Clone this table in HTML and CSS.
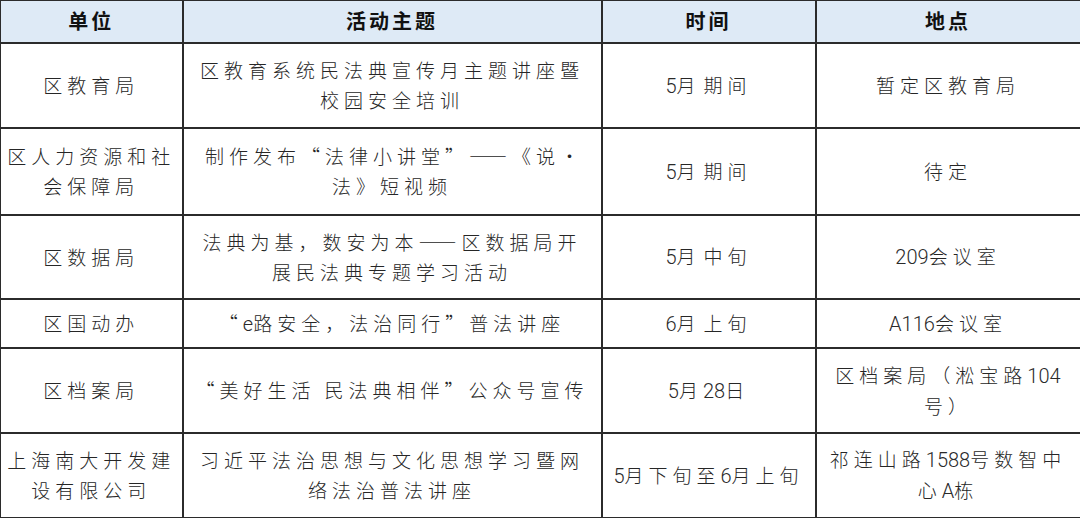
FILE: index.html
```html
<!DOCTYPE html>
<html lang="zh-CN">
<head>
<meta charset="utf-8">
<title>活动安排</title>
<link rel="stylesheet" href="styles.css">
</head>
<body>
<table class="schedule">
  <colgroup>
    <col class="c-unit">
    <col class="c-topic">
    <col class="c-time">
    <col class="c-place">
  </colgroup>
  <thead>
    <tr class="head-row">
      <th>单位</th>
      <th>活动主题</th>
      <th>时间</th>
      <th>地点</th>
    </tr>
  </thead>
  <tbody>
    <tr class="r1">
      <td>区教育局</td>
      <td>区教育系统民法典宣传月主题讲座暨<br>校园安全培训</td>
      <td><span class="num">5</span>月<span class="gap"></span>期间</td>
      <td>暂定区教育局</td>
    </tr>
    <tr class="r2">
      <td>区人力资源和社<br>会保障局</td>
      <td>制作发布“法律小讲堂”<span class="dash">——</span>《说<span class="dot">·</span><br>法》短视频</td>
      <td><span class="num">5</span>月<span class="gap"></span>期间</td>
      <td>待定</td>
    </tr>
    <tr class="r3">
      <td>区数据局</td>
      <td>法典为基，数安为本<span class="dash">——</span>区数据局开<br>展民法典专题学习活动</td>
      <td><span class="num">5</span>月<span class="gap"></span>中旬</td>
      <td><span class="num">209</span>会议室</td>
    </tr>
    <tr class="r4">
      <td>区国动办</td>
      <td>“<span class="num">e</span>路安全，法治同行”普法讲座</td>
      <td><span class="num">6</span>月<span class="gap"></span>上旬</td>
      <td><span class="num">A116</span>会议室</td>
    </tr>
    <tr class="r5">
      <td>区档案局</td>
      <td>“美好生活 民法典相伴”公众号宣传</td>
      <td><span class="num">5</span>月<span class="num">28</span>日</td>
      <td>区档案局（淞宝路<span class="num">104</span><br>号）</td>
    </tr>
    <tr class="r6">
      <td>上海南大开发建<br>设有限公司</td>
      <td>习近平法治思想与文化思想学习暨网<br>络法治普法讲座</td>
      <td><span class="num">5</span>月下旬至<span class="num">6</span>月上旬</td>
      <td>祁连山路<span class="num">1588</span>号数智中<br>心<span class="num">A</span>栋</td>
    </tr>
  </tbody>
</table>
</body>
</html>
```

FILE: styles.css
```css
html, body {
  margin: 0;
  padding: 0;
  background: #ffffff;
}

.schedule {
  width: 1080px;
  table-layout: fixed;
  border-collapse: collapse;
  font-family: "Noto Sans CJK SC", "Noto Sans", sans-serif;
  color: #262626;
}

.c-unit { width: 182px; }
.c-topic { width: 419px; }
.c-time { width: 214px; }
.c-place { width: 265px; }

.schedule th,
.schedule td {
  border: 2px solid #2b2b2b;
  text-align: center;
  vertical-align: middle;
  padding: 0 4px;
}

.head-row {
  height: 42px;
}

.head-row th {
  background: #deeaf6;
  font-weight: 700;
  font-size: 20px;
  letter-spacing: 3px;
  color: #111111;
  line-height: 26px;
  border-top-width: 1px;
}

.schedule td {
  font-size: 19px;
  font-weight: 300;
  letter-spacing: 5px;
  line-height: 30px;
}

.num {
  font-family: Roboto, "Liberation Sans", Arial, sans-serif;
  font-weight: 300;
  font-size: 20px;
  letter-spacing: 0;
  color: #2a2a2a;
}

.gap {
  display: inline-block;
  width: 3px;
}

.dash {
  letter-spacing: 0;
  margin-right: 5px;
}

.dot {
  display: inline-block;
  width: 19px;
  text-align: right;
  letter-spacing: 0;
}

.r1 { height: 85px; }
.r2 { height: 87px; }
.r3 { height: 84px; }
.r4 { height: 49px; }
.r5 { height: 85px; }
.r6 { height: 85px; }

.schedule tr > :first-child {
  border-left-width: 1px;
}
```
